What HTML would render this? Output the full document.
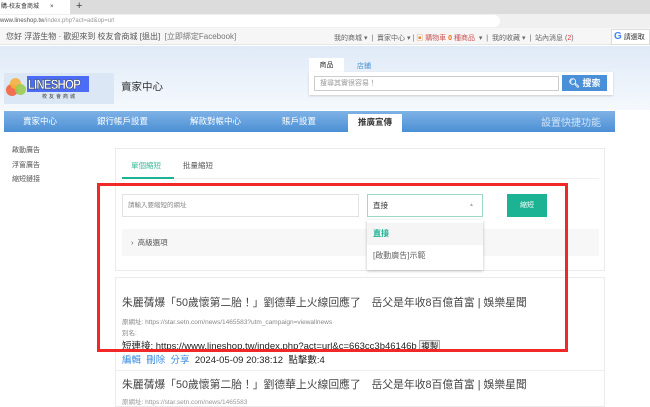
<!DOCTYPE html>
<html><head><meta charset="utf-8"><style>
*{margin:0;padding:0;box-sizing:border-box}
body{width:650px;height:400px;overflow:hidden;background:#fff;font-family:"Liberation Sans","Noto Sans CJK TC",sans-serif;position:relative;color:#333}
.a{position:absolute;white-space:nowrap}
</style></head><body>
<div class="a" style="left:0;top:0;width:650px;height:14px;background:#dcdcdc"></div>
<div class="a" style="left:0;top:0;width:70px;height:14px;background:#fff;font-size:6px;line-height:14px;padding-left:1px">購-校友會商城<span style="position:absolute;left:50px">×</span></div>
<div class="a" style="left:76px;top:0;font-size:11px;line-height:13px;color:#444">+</div>
<div class="a" style="left:0;top:14px;width:650px;height:14px;background:#f0f0f0"></div>
<div class="a" style="left:0;top:15px;width:500px;height:12px;background:#fff;border-radius:0 6px 6px 0;font-size:6px;line-height:12px;color:#555">www.lineshop.tw<span style="color:#999">/index.php?act=ad&amp;op=url</span></div>
<div class="a" style="left:0;top:28px;width:650px;height:17px;background:#f6f6f6;border-bottom:1px solid #e6e6e6"></div>
<div class="a" style="left:6px;top:31px;font-size:8px;color:#555">您好 浮游生物 · 歡迎來到 校友會商城 [退出] &nbsp;<span style="color:#777">[立即綁定Facebook]</span></div>
<div class="a" style="left:334px;top:33px;font-size:7px;color:#666">我的商城 ▾ &nbsp;| &nbsp;賣家中心 ▾ | <span style="color:#e08030">▣</span> <span style="color:#c55">購物車 <b style="color:#f60">0</b> 種商品</span> &nbsp;▾ &nbsp;| &nbsp;我的收藏 ▾ &nbsp;| &nbsp;站內消息 (<span style="color:#e33">2</span>)</div>
<div class="a" style="left:611px;top:29px;width:39px;height:16px;background:#fff;border:1px solid #ddd;font-size:7px;line-height:14px;padding-left:2px"><b style="color:#4285f4;font-size:10px">G</b> 請選取</div>
<div class="a" style="left:0;top:46px;width:650px;height:64px;background:linear-gradient(#dfeaf7,#f5f9fd)"></div>
<div class="a" style="left:4px;top:73px;width:110px;height:31px;background:#dbe7f5"></div>
<div class="a" style="left:6px;top:84px;width:12px;height:12px;border-radius:50%;background:#f07050"></div>
<div class="a" style="left:10px;top:78px;width:11px;height:11px;border-radius:50%;background:#f5b040;opacity:.9"></div>
<div class="a" style="left:15px;top:84px;width:11px;height:11px;border-radius:50%;background:#9ccc50;opacity:.9"></div>
<div class="a" style="left:27px;top:76px;width:62px;height:16px;background:#4c6cf5;overflow:hidden"><div style="color:#fff;font-weight:bold;font-size:14px;line-height:16px;letter-spacing:-1px;transform:scaleX(.82);transform-origin:left;padding-left:1px;-webkit-text-stroke:.4px #233">LINESHOP</div></div>
<div class="a" style="left:42px;top:93px;font-size:5px;color:#333;letter-spacing:2px">校友會商城</div>
<div class="a" style="left:121px;top:79px;font-size:10.5px;color:#333">賣家中心</div>
<div class="a" style="left:309px;top:58px;width:35px;height:15px;background:#fff;font-size:7px;text-align:center;line-height:15px">商品</div>
<div class="a" style="left:357px;top:61px;font-size:7px;color:#4a8fd0">店鋪</div>
<div class="a" style="left:309px;top:72px;width:304px;height:23px;background:#fff;box-shadow:0 1px 2px #ccc"></div>
<div class="a" style="left:314px;top:76px;width:245px;height:15px;border:1px solid #ccc;font-size:7px;color:#999;line-height:13px;padding-left:5px">搜尋其實很容易！</div>
<div class="a" style="left:562px;top:75px;width:45px;height:16px;background:#4a90d9;color:#fff;font-size:9px;line-height:16px;text-align:center;font-weight:bold">🔍︎ 搜索</div>
<div class="a" style="left:4px;top:111px;width:611px;height:21px;background:linear-gradient(#7fb2e6,#4b8fd4)"></div>
<div class="a" style="left:23px;top:115px;font-size:8.5px;color:#fff">賣家中心</div>
<div class="a" style="left:97px;top:115px;font-size:8.5px;color:#fff">銀行帳戶設置</div>
<div class="a" style="left:190px;top:115px;font-size:8.5px;color:#fff">解款對帳中心</div>
<div class="a" style="left:282px;top:115px;font-size:8.5px;color:#fff">賬戶設置</div>
<div class="a" style="left:348px;top:114px;width:54px;height:18px;background:#fff;font-size:8.5px;font-weight:bold;color:#333;text-align:center;line-height:17px">推廣宣傳</div>
<div class="a" style="left:541px;top:114px;font-size:10px;color:#cfe3f7">設置快捷功能</div>
<div class="a" style="left:12px;top:144px;font-size:7px;line-height:14.5px;color:#555;white-space:normal">啟動廣告<br>浮窗廣告<br>縮短鏈接</div>
<div class="a" style="left:115px;top:148px;width:490px;height:123px;border:1px solid #ebebeb"></div>
<div class="a" style="left:131px;top:160px;font-size:7.5px;color:#3bb89a">單個縮短</div>
<div class="a" style="left:183px;top:160px;font-size:7.5px;color:#555">批量縮短</div>
<div class="a" style="left:122px;top:177px;width:52px;height:2px;background:#1bb394"></div>
<div class="a" style="left:174px;top:178px;width:425px;height:1px;background:#eee"></div>
<div class="a" style="left:122px;top:194px;width:237px;height:23px;border:1px solid #e2e2e2;font-size:6.5px;color:#888;line-height:21px;padding-left:5px">請輸入要縮短的網址</div>
<div class="a" style="left:367px;top:194px;width:116px;height:23px;border:1px solid #9ed8c7;font-size:7.5px;line-height:21px;padding-left:5px;background:#fff">直接<span style="position:absolute;right:8px;color:#aaa;font-size:5px">▲</span></div>
<div class="a" style="left:507px;top:194px;width:40px;height:23px;background:#1bb394;color:#fff;font-size:7px;line-height:23px;text-align:center">縮短</div>
<div class="a" style="left:122px;top:229px;width:477px;height:27px;background:#f7f7f7;font-size:7.5px;line-height:27px;padding-left:9px;color:#555">›&nbsp; 高級選項</div>
<div class="a" style="left:367px;top:220px;width:116px;height:50px;background:#fff;box-shadow:0 1px 3px #bbb"></div>
<div class="a" style="left:367px;top:223px;width:116px;height:22px;background:#f5f5f5;font-size:8px;font-weight:bold;color:#1bb394;line-height:22px;padding-left:6px">直接</div>
<div class="a" style="left:373px;top:250px;font-size:8px;color:#666">[啟動廣告]示範</div>
<div class="a" style="left:115px;top:277px;width:490px;height:130px;border:1px solid #ebebeb"></div>
<div class="a" style="left:122px;top:294px;font-size:10.8px;color:#444">朱麗蒨爆「50歲懷第二胎！」劉德華上火線回應了　岳父是年收8百億首富 | 娛樂星聞</div>
<div class="a" style="left:122px;top:316px;font-size:6.5px;color:#888">原網址: https://star.setn.com/news/1465583?utm_campaign=viewallnews</div>
<div class="a" style="left:122px;top:327px;font-size:6.5px;color:#888">別名:</div>
<div class="a" style="left:122px;top:338px;font-size:9.5px;color:#222">短連接: https://www.lineshop.tw/index.php?act=url&amp;c=663cc3b46146b <span style="border:1px solid #aaa;background:#eee;font-size:8.5px;padding:0 1px">複製</span></div>
<div class="a" style="left:122px;top:352px;font-size:9.5px;color:#222"><span style="color:#3a8de0">編輯 &nbsp;刪除 &nbsp;分享</span> &nbsp;2024-05-09 20:38:12 &nbsp;點擊數:4</div>
<div class="a" style="left:115px;top:370px;width:490px;height:1px;background:#eee"></div>
<div class="a" style="left:122px;top:376px;font-size:10.8px;color:#444">朱麗蒨爆「50歲懷第二胎！」劉德華上火線回應了　岳父是年收8百億首富 | 娛樂星聞</div>
<div class="a" style="left:122px;top:396px;font-size:6.5px;color:#999">原網址: https://star.setn.com/news/1465583</div>
<div class="a" style="left:97px;top:183px;width:471px;height:169px;border:3px solid #f02828"></div>
</body></html>
